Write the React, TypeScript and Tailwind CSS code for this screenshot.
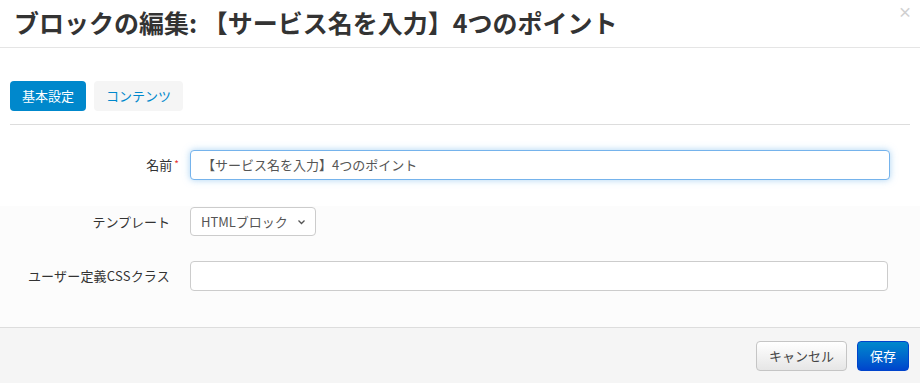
import React from "react";

const font = { fontFamily: '"Noto Sans CJK JP", "Noto Sans", sans-serif' };

export default function App() {
  return (
    <div className="w-[920px] h-[383px] bg-white flex flex-col text-[#333]" style={font}>
      <div className="h-[48px] border-b border-[#e5e5e5] flex items-center justify-between pl-[14px] pr-[8px] shrink-0">
        <h3 className="text-[25px] font-bold leading-none text-[#333] tracking-[0px] -mt-[2px]">
          ブロックの編集: 【サービス名を入力】4つのポイント
        </h3>
        <span className="text-[14px] font-bold text-[#d0d0d0] self-start mt-[4px] leading-none">×</span>
      </div>
      <div className="flex-1 flex flex-col">
        <div className="px-[10px] pt-[33px]">
          <div className="flex gap-[8px]">
            <div className="h-[30px] w-[76px] rounded-[4px] bg-[#0088cc] text-white text-[13px] flex items-center justify-center">
              基本設定
            </div>
            <div className="h-[30px] w-[89px] rounded-[4px] bg-[#f5f5f5] text-[#0088cc] text-[13px] flex items-center justify-center">
              コンテンツ
            </div>
          </div>
          <div className="mt-[13px] border-t border-[#dddddd]" />
        </div>
        <div className="pt-[25px] bg-white">
          <div className="flex items-center h-[30px]">
            <div className="w-[190px] pr-[11px] flex justify-end text-[13px] items-center">
              名前<span className="text-[#e9322d] text-[10px] ml-[2px] -mt-[3px]">*</span>
            </div>
            <div className="w-[700px] h-[30px] border border-[#75b3ec] rounded-[4px] bg-white shadow-[0_0_7px_rgba(102,175,233,0.55)] flex items-center pl-[11px] text-[13px] text-[#555]">
              【サービス名を入力】4つのポイント
            </div>
          </div>
          <div className="h-[26px]" />
        </div>
        <div className="flex-1 bg-[#fcfcfc] flex flex-col">
          <div className="flex items-center h-[29px] mt-[1px]">
            <div className="w-[190px] pr-[20px] text-right text-[13px]">テンプレート</div>
            <div className="w-[126px] h-[29px] border border-[#cccccc] rounded-[4px] bg-white flex items-center justify-between pl-[10px] pr-[9px] text-[13px] text-[#555]">
              <span>HTMLブロック</span>
              <svg width="9" height="6" viewBox="0 0 9 6">
                <path d="M1.5 1.5 L4.5 4.5 L7.5 1.5" fill="none" stroke="#555" strokeWidth="1.3" />
              </svg>
            </div>
          </div>
          <div className="h-[25px]" />
          <div className="flex items-center h-[30px]">
            <div className="w-[190px] pr-[20px] text-right text-[13px] tracking-[0.2px]">ユーザー定義CSSクラス</div>
            <div className="w-[698px] h-[30px] border border-[#cccccc] rounded-[4px] bg-white" />
          </div>
        </div>
      </div>
      <div className="h-[56px] border-t border-[#dddddd] bg-[#f5f5f5] flex items-center justify-end gap-[10px] pr-[11px] shrink-0">
        <div className="h-[30px] w-[91px] rounded-[4px] border border-[#c5c5c5] bg-gradient-to-b from-white to-[#e6e6e6] text-[#444] text-[13px] flex items-center justify-center">
          キャンセル
        </div>
        <div className="h-[30px] w-[52px] rounded-[4px] border border-[#0044cc] bg-gradient-to-b from-[#0088cc] to-[#0044cc] text-white text-[13px] flex items-center justify-center">
          保存
        </div>
      </div>
    </div>
  );
}
